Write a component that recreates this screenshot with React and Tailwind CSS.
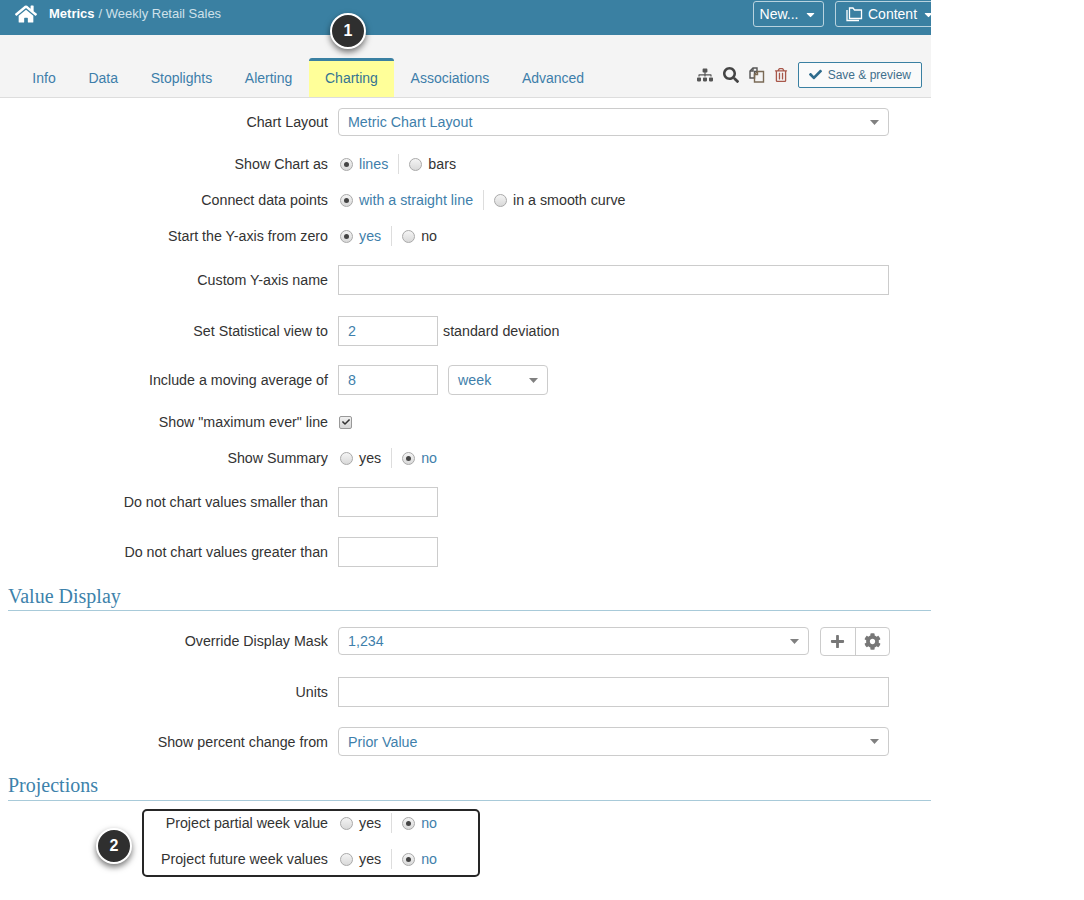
import React from "react";
import { FaHome, FaCaretDown, FaSitemap, FaSearch, FaRegTrashAlt, FaCheck, FaPlus, FaCog } from "react-icons/fa";

const VAL = "text-[#3f7fab]";

function Radio({ checked }) {
  return (
    <span className="relative inline-flex h-[13px] w-[13px] items-center justify-center rounded-full border border-[#a9a9a9] bg-gradient-to-b from-[#f4f4f4] to-[#d9d9d9]">
      {checked && <span className="h-[5px] w-[5px] rounded-full bg-[#444]" />}
    </span>
  );
}

function RadioGroup({ options, selected }) {
  return (
    <div className="flex items-center pl-[2px]">
      {options.map((o, i) => (
        <React.Fragment key={o}>
          {i > 0 && <span className="mx-[10px] h-[20px] w-px bg-[#dddddd]" />}
          <span className="flex items-center gap-[6px]">
            <Radio checked={i === selected} />
            <span className={`pt-[2px] ${i === selected ? VAL : "text-[#333]"}`}>{o}</span>
          </span>
        </React.Fragment>
      ))}
    </div>
  );
}

function Caret() {
  return (
    <svg width="9" height="5" viewBox="0 0 9 5" className="shrink-0">
      <path d="M0 0 L9 0 L4.5 5 Z" fill="#808080" />
    </svg>
  );
}

function Select({ value, w, h = "h-[28px]" }) {
  return (
    <div className={`flex ${w} ${h} items-center justify-between rounded-[4px] border border-[#cccccc] bg-white pl-[9px] pr-[9px]`}>
      <span className={`pt-[2px] ${VAL}`}>{value}</span>
      <Caret />
    </div>
  );
}

function Input({ value = "", w }) {
  return (
    <div className={`flex ${w} h-[30px] items-center border border-[#cccccc] bg-white pl-[9px]`}>
      <span className={`pt-[2px] ${VAL}`}>{value}</span>
    </div>
  );
}

function Row({ label, h, children }) {
  return (
    <div className={`flex ${h} items-center`}>
      <div className="w-[328px] shrink-0 whitespace-nowrap pt-[2px] text-right text-[#333]">{label}</div>
      <div className="ml-[10px] flex items-center">{children}</div>
    </div>
  );
}

function Heading({ children, cls }) {
  return (
    <div className={`ml-[8px] flex items-center border-b border-[#a8cad9] ${cls}`}>
      <span className="font-['Liberation_Serif',serif] text-[20px] leading-none text-[#3d82ab]">{children}</span>
    </div>
  );
}

function Badge({ n, cls }) {
  return (
    <div className={`absolute flex h-[36px] w-[36px] items-center justify-center rounded-full border-[2px] border-white bg-[#2f2f2f] text-[16px] font-bold text-white shadow-[0_3px_6px_rgba(0,0,0,0.55)] ${cls}`}>
      {n}
    </div>
  );
}

function FoldersIcon() {
  return (
    <svg width="17" height="15" viewBox="0 0 17 15" fill="none" stroke="white" strokeWidth="1.3">
      <path d="M1 3 V13.5 H13" />
      <path d="M3.5 1 H7 L8.5 3 H15.5 V11.5 H3.5 Z" />
    </svg>
  );
}

function CopyIcon() {
  return (
    <svg width="16" height="16" viewBox="0 0 16 16" fill="none" stroke="#555" strokeWidth="1.4">
      <path d="M4 1 H8 V4.5 H5.5 V11 H1 V4 Z" />
      <path d="M1 4 H4 V1" />
      <path d="M8.5 4.5 H14.5 V15 H5.5 V7.5 Z" stroke="#7a6a55" />
      <path d="M5.5 7.5 H8.5 V4.5" stroke="#7a6a55" />
    </svg>
  );
}

const tabs = ["Info", "Data", "Stoplights", "Alerting", "Charting", "Associations", "Advanced"];

export default function App() {
  return (
    <div className="min-h-[900px] w-full bg-white font-['Liberation_Sans',Arial,sans-serif] text-[14.25px]">
      <div className="relative w-[931px] overflow-hidden">
        {/* Header */}
        <div className="flex h-[35px] items-start bg-[#3a80a2]">
          <div className="flex h-[28px] items-center">
            <FaHome className="ml-[15px] text-white" size={22} />
            <span className="ml-[12px] text-[13px] font-bold text-white">Metrics</span>
            <span className="ml-[4px] text-[13px] text-[#cfe1ea]">/ Weekly Retail Sales</span>
          </div>
          <div className="ml-auto mt-[1px] flex">
            <div className="flex h-[26px] w-[71px] items-center justify-center gap-[6px] rounded-[3px] border border-[#b8d3df] text-[14px] text-white">
              <span>New...</span>
              <FaCaretDown size={13} />
            </div>
            <div className="ml-[11px] mr-[-10px] flex h-[26px] w-[106px] items-center gap-[5px] rounded-[3px] border border-[#b8d3df] pl-[10px] text-[14px] text-white">
              <FoldersIcon />
              <span>Content</span>
              <FaCaretDown size={13} />
            </div>
          </div>
        </div>

        {/* Tabs */}
        <div className="flex h-[63px] items-end border-b border-[#dddddd] bg-[#f4f4f4] pl-[16px]">
          {tabs.map((t) => (
            <div
              key={t}
              className={`flex h-[39px] items-center border-t-[3px] px-[16.35px] pb-[1px] text-[14px] ${
                t === "Charting" ? "rounded-t-[3px] border-[#3a80a2] bg-[#ffff99] text-[#357493]" : "border-transparent text-[#3d7eaa]"
              }`}
            >
              {t}
            </div>
          ))}
          <div className="ml-auto flex h-[39px] items-center pb-[6px] pr-[9px]">
            <FaSitemap size={16} className="text-[#555]" />
            <FaSearch size={16} className="ml-[10px] text-[#444]" />
            <span className="ml-[10px]"><CopyIcon /></span>
            <FaRegTrashAlt size={14} className="ml-[9px] text-[#a8574a]" />
            <div className="ml-[10px] flex h-[26px] items-center gap-[6px] rounded-[2px] border border-[#3a80a2] bg-[#fafafa] px-[10px] text-[12px] text-[#3f6f8c]">
              <FaCheck size={13} className="text-[#2e6b8c]" />
              <span>Save &amp; preview</span>
            </div>
          </div>
        </div>

        {/* Form */}
        <Row label="Chart Layout" h="h-[48px]">
          <Select value="Metric Chart Layout" w="w-[551px]" />
        </Row>
        <Row label="Show Chart as" h="h-[36px]">
          <RadioGroup options={["lines", "bars"]} selected={0} />
        </Row>
        <Row label="Connect data points" h="h-[36px]">
          <RadioGroup options={["with a straight line", "in a smooth curve"]} selected={0} />
        </Row>
        <Row label="Start the Y-axis from zero" h="h-[36px]">
          <RadioGroup options={["yes", "no"]} selected={0} />
        </Row>
        <Row label="Custom Y-axis name" h="h-[52px]">
          <Input w="w-[551px]" />
        </Row>
        <Row label="Set Statistical view to" h="h-[49px]">
          <Input value="2" w="w-[100px]" />
          <span className="ml-[5px] pt-[2px] text-[#333]">standard deviation</span>
        </Row>
        <Row label="Include a moving average of" h="h-[50px]">
          <Input value="8" w="w-[100px]" />
          <div className="ml-[10px]">
            <Select value="week" w="w-[100px]" h="h-[30px]" />
          </div>
        </Row>
        <Row label={'Show "maximum ever" line'} h="h-[34px]">
          <span className="ml-[1px] flex h-[13px] w-[13px] items-center justify-center rounded-[2px] border border-[#999] bg-gradient-to-b from-[#f0f0f0] to-[#d6d6d6]">
            <FaCheck size={8} className="text-[#333]" />
          </span>
        </Row>
        <Row label="Show Summary" h="h-[38px]">
          <RadioGroup options={["yes", "no"]} selected={1} />
        </Row>
        <Row label="Do not chart values smaller than" h="h-[50px]">
          <Input w="w-[100px]" />
        </Row>
        <Row label="Do not chart values greater than" h="h-[50px]">
          <Input w="w-[100px]" />
        </Row>

        <Heading cls="h-[34px] pt-[5px]">Value Display</Heading>

        <Row label="Override Display Mask" h="h-[60px]">
          <Select value="1,234" w="w-[471px]" />
          <div className="ml-[11px] flex h-[29px] w-[70px] rounded-[4px] border border-[#cccccc]">
            <div className="flex flex-1 items-center justify-center border-r border-[#cccccc]">
              <FaPlus size={15} className="text-[#777]" />
            </div>
            <div className="flex flex-1 items-center justify-center">
              <FaCog size={17} className="text-[#777]" />
            </div>
          </div>
        </Row>
        <Row label="Units" h="h-[42px]">
          <Input w="w-[551px]" />
        </Row>
        <Row label="Show percent change from" h="h-[57px]">
          <Select value="Prior Value" w="w-[551px]" h="h-[29px]" />
        </Row>

        <Heading cls="h-[31px]">Projections</Heading>

        <div className="relative pb-[23px] pt-[4px]">
          <Row label="Project partial week value" h="h-[36px]">
            <RadioGroup options={["yes", "no"]} selected={1} />
          </Row>
          <Row label="Project future week values" h="h-[36px]">
            <RadioGroup options={["yes", "no"]} selected={1} />
          </Row>
          <div className="absolute left-[142px] top-[8px] h-[68px] w-[338px] rounded-[5px] border-[2px] border-[#262626]" />
          <Badge n="2" cls="left-[96px] top-[27px]" />
        </div>

        <Badge n="1" cls="left-[330px] top-[13px]" />
      </div>
    </div>
  );
}
